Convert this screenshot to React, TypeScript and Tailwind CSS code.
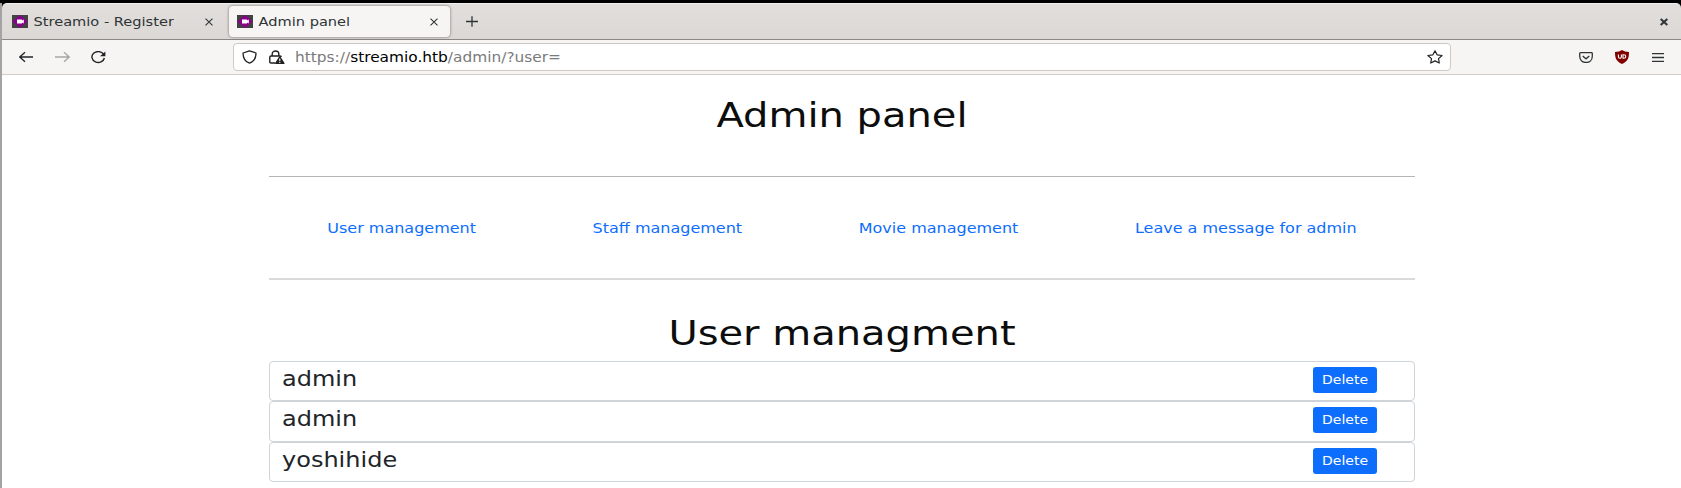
import type { ReactNode } from "react";

const users = ["admin", "admin", "yoshihide"];
const sections = ["User management", "Staff management", "Movie management", "Leave a message for admin"];

function Label({ className, children }: { className: string; children: ReactNode }) {
  return <span className={`block origin-center scale-y-[0.86] whitespace-nowrap ${className}`}>{children}</span>;
}

function Favicon() {
  return (
    <svg className="shrink-0" width="16" height="13" viewBox="0 0 16 13">
      <path fill="#424242" d="M0 0h16v13H0z" />
      <path fill="#8b008b" d="M8 0l7.600 6.500L8 13 .4 6.500z" />
      <path fill="#fff" d="M5 4.500h5v1l1.800-.9v3.800L10 7.500v1H5z" />
    </svg>
  );
}

function CloseTab() {
  return (
    <svg className="shrink-0" width="8" height="8" viewBox="0 0 8 8" fill="none" stroke="#2e3436" strokeWidth="1.1">
      <path d="M.5 .7l7 6.600M7.500 .7l-7 6.600" />
    </svg>
  );
}

function TabBar() {
  return (
    <div className="flex h-9 items-center rounded-t-[5px] border-t border-[#f3f1f0] bg-linear-to-b from-[#e1dedb] to-[#dcd8d5]">
      <div className="flex h-[30px] w-[227px] items-center pl-[10px]">
        <Favicon />
        <Label className="ml-[5.5px] w-[171.5px] text-[14.6px] text-[#2e3436]">Streamio - Register</Label>
        <CloseTab />
      </div>
      <div className="flex h-[31px] w-[221px] items-center rounded-[4px] bg-[#f6f5f4] pl-2 shadow-[0_0_3px_rgba(0,0,0,0.5)]">
        <Favicon />
        <Label className="ml-[5.5px] w-[171.5px] text-[14.6px] text-[#2e3436]">Admin panel</Label>
        <CloseTab />
      </div>
      <svg className="ml-4" width="12" height="11" viewBox="0 0 12 11" fill="none" stroke="#2e3436" strokeWidth="1.3">
        <path d="M0 5.500h12M6 .3v10.400" />
      </svg>
      <svg className="mr-[13px] ml-auto" width="8" height="8" viewBox="0 0 8 8" fill="none" stroke="#2e3436" strokeWidth="2">
        <path d="M.7 1l6.600 6M7.300 1L.7 7" />
      </svg>
    </div>
  );
}

function Toolbar() {
  return (
    <div className="flex h-9 items-center border-t border-b border-t-[#8b8784] border-b-[#cfccc9] bg-[#f6f5f4]">
      <svg className="ml-[17px]" width="15" height="12" viewBox="0 0 15 12" fill="none" stroke="#202428" strokeWidth="1.3">
        <path d="M14 6H1M6 1.200L.8 6 6 10.800" />
      </svg>
      <svg className="ml-[21px]" width="15" height="12" viewBox="0 0 15 12" fill="none" stroke="#a5a5a4" strokeWidth="1.3">
        <path d="M0 6h13.500M9 1.200L14.200 6 9 10.800" />
      </svg>
      <svg className="ml-[21px]" width="15" height="13" viewBox="0 0 15 13">
        <path fill="none" stroke="#202428" strokeWidth="1.4" d="M12.600 3.200A6.300 5.400 0 1 0 13.400 7" />
        <path fill="#202428" d="M14.400 .4v4.900H9z" />
      </svg>
      <div className="ml-[127px] flex h-7 w-[1218px] items-center rounded-[4px] border border-[#cdc8c3] bg-white">
        <svg className="ml-[7.5px]" width="15" height="14" viewBox="0 0 15 14" fill="none" stroke="#202020" strokeWidth="1.3">
          <path d="M7.500 .8L14 3C14 8 12.200 11.600 7.500 13.200C2.800 11.600 1 8 1 3z" strokeLinejoin="round" />
        </svg>
        <svg className="ml-[12.5px]" width="16" height="15" viewBox="0 0 16 15">
          <path d="M3.200 6V4C3.200 -.1 9.800 -.1 9.800 4v2" fill="none" stroke="#202020" strokeWidth="1.4" />
          <path d="M6.500 13H2Q.8 13 .8 12V7Q.8 6 2 6h9q1.200 0 1.200 1" fill="none" stroke="#202020" strokeWidth="1.4" />
          <path d="M10.800 6.300Q11.300 6.300 11.700 7l3.800 6Q16 14 14.800 14H6.800Q5.700 14 6.200 13l3.700-6Q10.300 6.300 10.800 6.300z" fill="#202020" />
          <path d="M10.800 8.500v2.700M10.800 12v1.100" stroke="#fff" strokeWidth="1.1" />
        </svg>
        <Label className="mt-[3px] ml-[10px] text-[15.38px] text-[#7a7a7a]">
          https://<span className="text-black">streamio.htb</span>/admin/?user=
        </Label>
        <svg className="mr-[7px] ml-auto" width="16" height="14" viewBox="0 0 16 14" fill="none" stroke="#202020" strokeWidth="1.2" strokeLinejoin="round">
          <path d="M8 .9l2.100 3.900 5 .7-3.600 3.100.8 4.400L8 10.900 3.700 13l.8-4.400L.9 5.500l5-.7z" />
        </svg>
      </div>
      <svg className="ml-[128px]" width="14" height="11" viewBox="0 0 14 11" fill="none" stroke="#2e3436" strokeWidth="1.3">
        <path d="M1.600 .7h10.800q.9 0 .9.800v2.700C13.300 12.600.7 12.600.7 4.200V1.500q0-.8.9-.8zM3.700 4L7 6.800 10.300 4" />
      </svg>
      <svg className="ml-[22px]" width="14" height="14" viewBox="0 0 14 14">
        <path fill="#800000" d="M7 0Q9.500 2 14 2C14 8 13 11.300 7 14C1 11.300 0 8 0 2Q4.500 2 7 0z" />
        <path fill="none" stroke="#fff" strokeWidth="1.1" d="M3.400 4.500v2.300c0 2 3 2 3 0V4.500M8 4.700v3.500h.8c2.600 0 2.600-3.500 0-3.500z" />
      </svg>
      <svg className="ml-[23px]" width="12" height="9" viewBox="0 0 12 9" fill="none" stroke="#2e3436" strokeWidth="1.3">
        <path d="M0 .7h12M0 4.500h12M0 8.300h12" />
      </svg>
    </div>
  );
}

function UserRow({ name }: { name: string }) {
  return (
    <div className="flex h-[40.5px] items-center justify-between rounded-[4px] border border-[#ced4da] pr-[37px] pl-3">
      <Label className="-mt-1 text-2xl text-[#212529]">{name}</Label>
      <button className="-mt-[2.4px] h-[26px] w-16 rounded-[3px] bg-[#0d6efd] text-white">
        <Label className="text-sm">Delete</Label>
      </button>
    </div>
  );
}

export default function App() {
  return (
    <div className="h-[488px] w-full overflow-hidden bg-black pt-[3px] font-['DejaVu_Sans',sans-serif]">
      <div className="h-full border-l-2 border-[#a3a3a3]">
        <TabBar />
        <Toolbar />
        <main className="h-full bg-white pl-[267px]">
          <div className="w-[1146px]">
            <h1 className="flex h-[101px] justify-center pt-2 text-[40px] text-[#0c0d0d]">
              <Label className="">Admin panel</Label>
            </h1>
            <hr className="border-t border-[#b5b5b5]" />
            <nav className="flex h-[101px] items-center justify-around pt-[2px]">
              {sections.map((section) => (
                <a key={section} href="#" className="text-base text-[#0d6efd]">
                  <Label className="">{section}</Label>
                </a>
              ))}
            </nav>
            <hr className="border-t-2 border-[#dadada]" />
            <h2 className="flex h-[80.6px] justify-center pt-[23px] text-[40px] text-[#0c0d0d]">
              <Label className="">User managment</Label>
            </h2>
            {users.map((name, index) => (
              <UserRow key={index} name={name} />
            ))}
          </div>
        </main>
      </div>
    </div>
  );
}
